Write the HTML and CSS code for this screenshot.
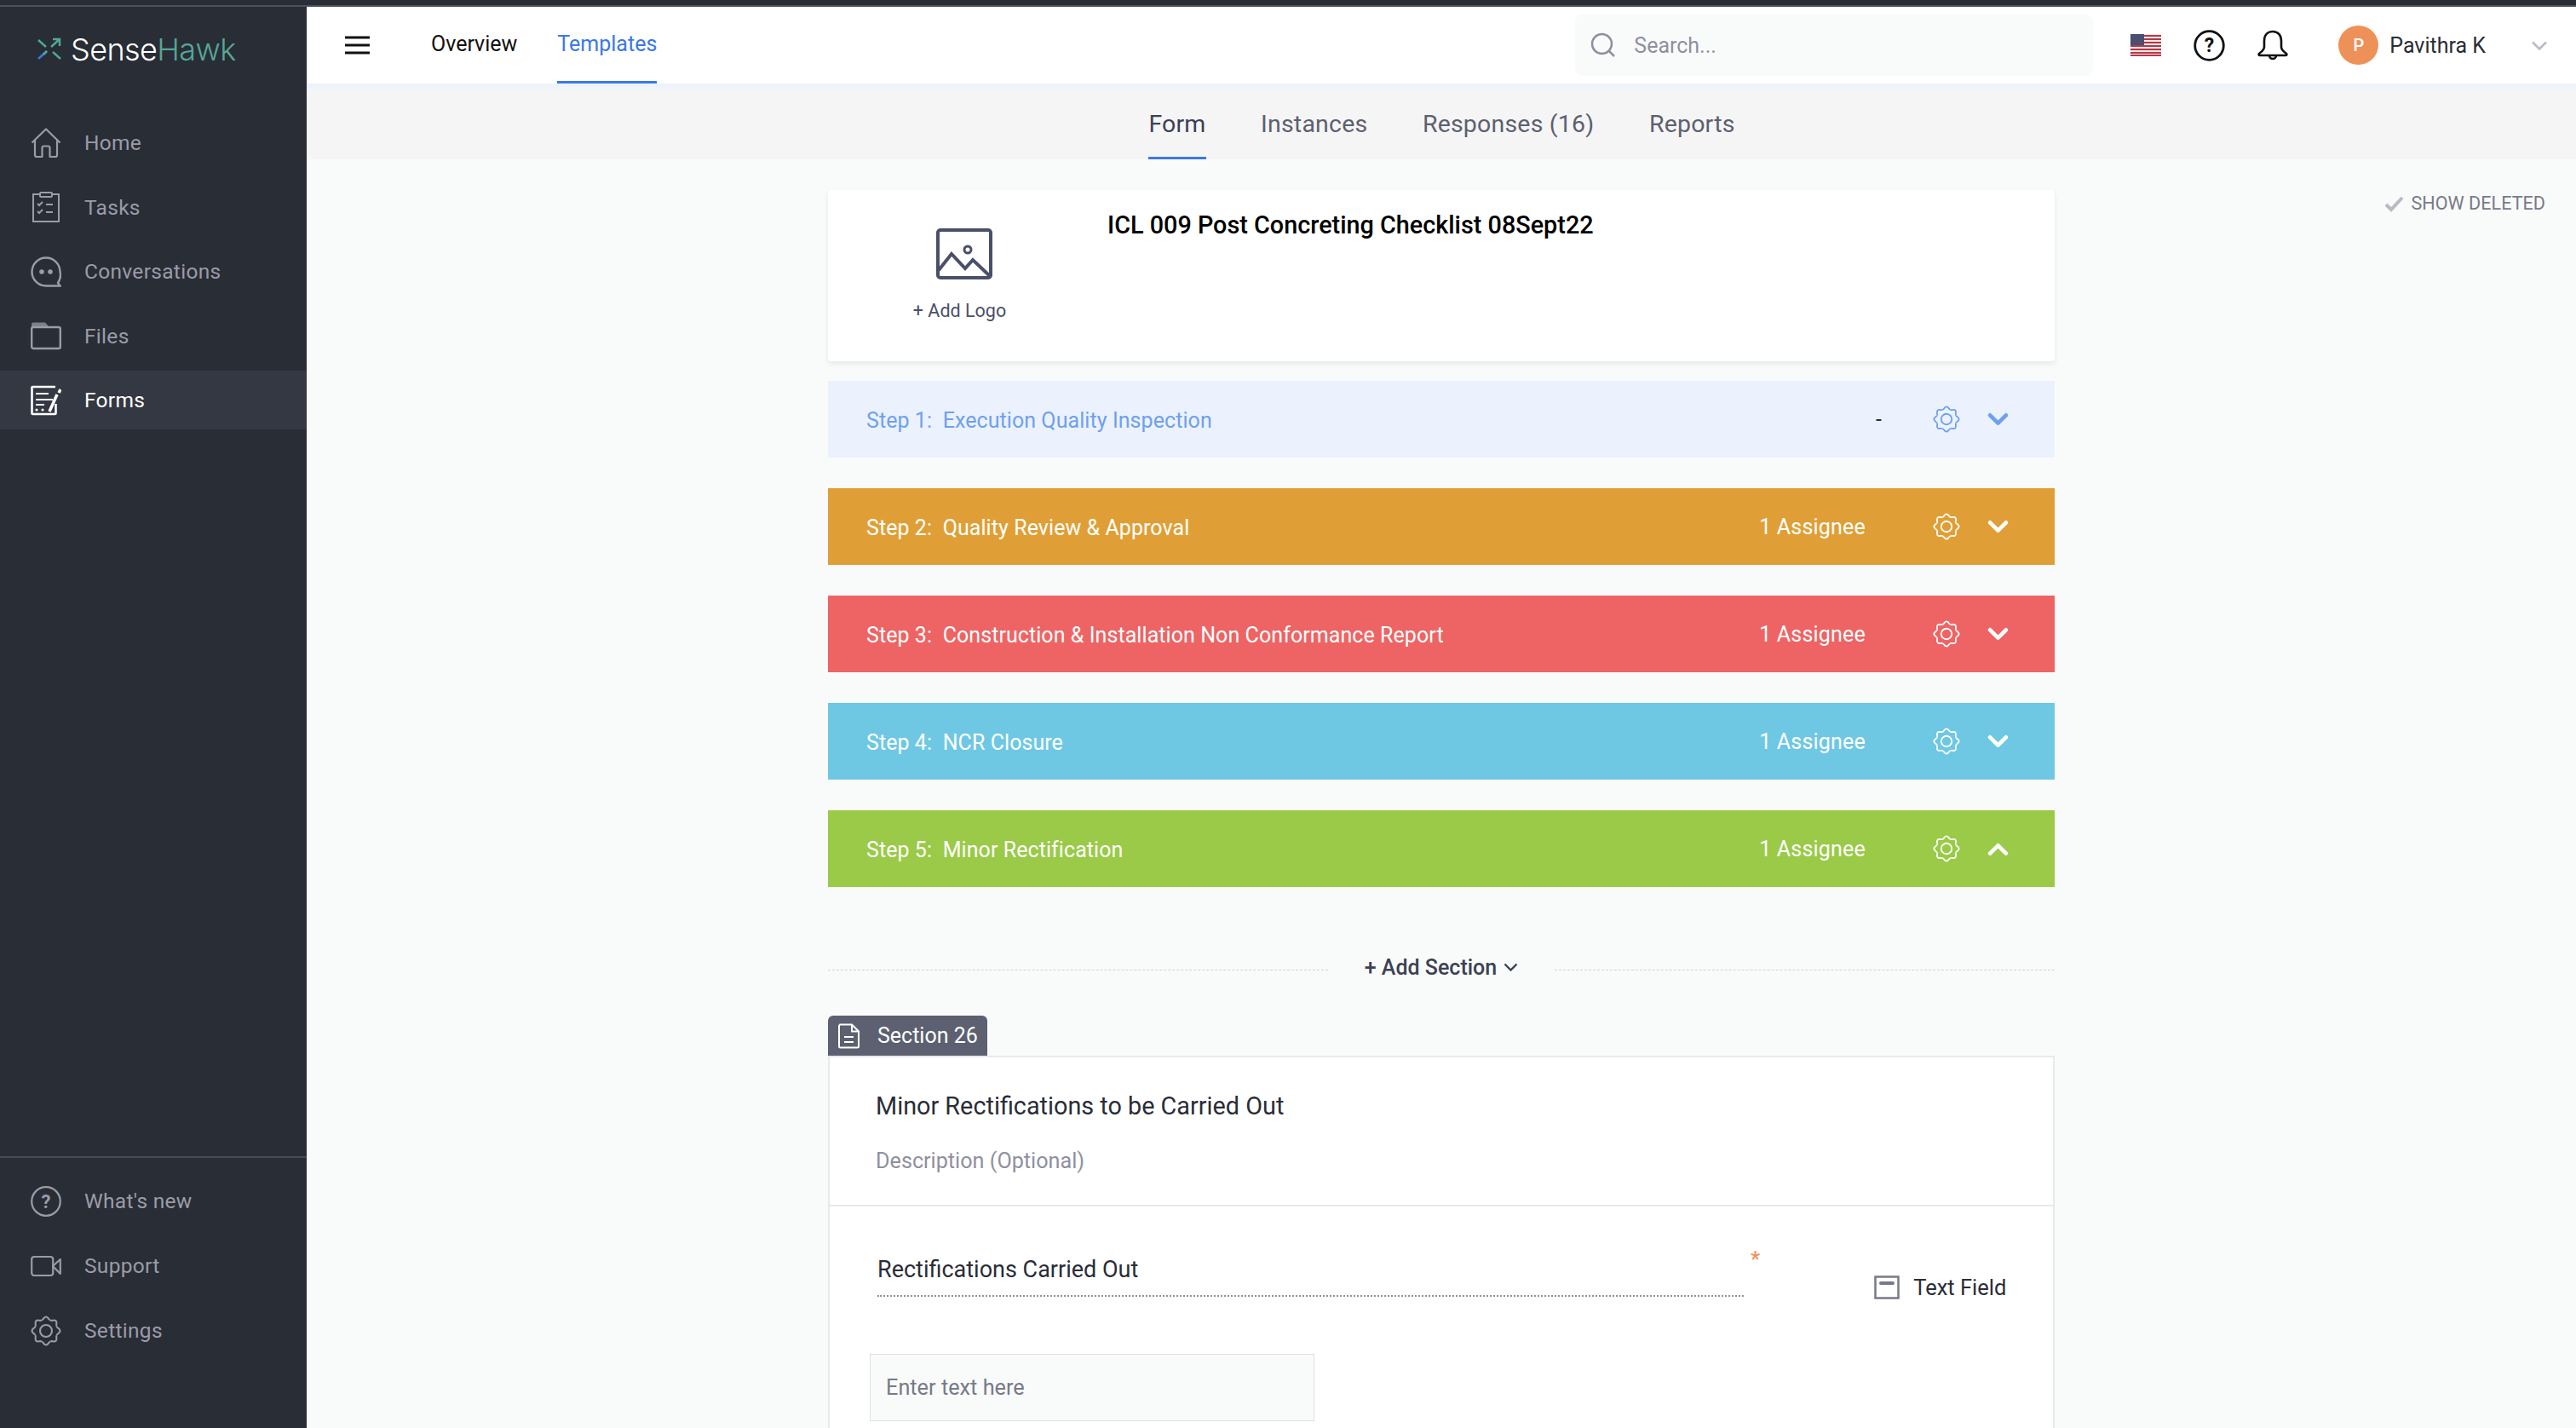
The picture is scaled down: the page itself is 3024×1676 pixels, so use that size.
FILE: index.html
```html
<!DOCTYPE html>
<html lang="en">
<head>
<meta charset="utf-8">
<title>SenseHawk Forms</title>
<link rel="stylesheet" href="styles.css">
</head>
<body>
<svg class="defs" width="0" height="0" aria-hidden="true">
  <defs>
    <path id="lobe" d="M12.720 5.250C15 5.500 15 1.500 18 1.500C21 1.500 21 5.500 23.280 5.250" fill="none" stroke="currentColor" stroke-width="2.100"/>
    <symbol id="gear" viewBox="0 0 36 36">
      <use href="#lobe"/>
      <use href="#lobe" transform="rotate(45 18 18)"/>
      <use href="#lobe" transform="rotate(90 18 18)"/>
      <use href="#lobe" transform="rotate(135 18 18)"/>
      <use href="#lobe" transform="rotate(180 18 18)"/>
      <use href="#lobe" transform="rotate(225 18 18)"/>
      <use href="#lobe" transform="rotate(270 18 18)"/>
      <use href="#lobe" transform="rotate(315 18 18)"/>
      <circle cx="18" cy="18" r="7" fill="none" stroke="currentColor" stroke-width="2.100"/>
    </symbol>
    <symbol id="chev" viewBox="0 0 24 16">
      <path d="M3 3l9 9 9-9" fill="none" stroke="currentColor" stroke-width="4.500" stroke-linecap="round" stroke-linejoin="round"/>
    </symbol>
  </defs>
</svg>
<div class="strip"></div>
<div class="app">
  <aside class="sidebar">
    <div class="logo">
      <svg class="logo-mark" width="30" height="28" viewBox="0 0 30 28">
        <path d="M2 3l9 8" stroke="#4fa899" stroke-width="2.500" fill="none"/>
        <path d="M19 17l9 8" stroke="#4fa899" stroke-width="2.500" fill="none"/>
        <path d="M2 25L12 16" stroke="#3b78e7" stroke-width="2.500" fill="none"/>
        <path d="M8 20l4-4" stroke="#4fa899" stroke-width="2.500" fill="none"/>
        <path d="M17 11l10-9M19 2h8v8" stroke="#4fa899" stroke-width="2.500" fill="none"/>
      </svg>
      <span class="logo-text">Sense<span class="logo-accent">Hawk</span></span>
    </div>
    <nav class="nav">
      <a class="nav-item">
        <svg class="nav-icon" viewBox="0 0 36 36"><path d="M1.500 17.500L18 1.500l16.500 16M5 14.500V32a2 2 0 0 0 2 2h6.500V23.500a2 2 0 0 1 2-2h5a2 2 0 0 1 2 2V34H29a2 2 0 0 0 2-2V14.500" fill="none" stroke="currentColor" stroke-width="2.200" stroke-linejoin="round"/></svg>
        <span>Home</span>
      </a>
      <a class="nav-item">
        <svg class="nav-icon" viewBox="0 0 36 36"><path d="M10 3H3v32h30V3h-7" fill="none" stroke="currentColor" stroke-width="2"/><rect x="11" y="1" width="14" height="5" rx="1" fill="none" stroke="currentColor" stroke-width="2"/><path d="M8 14l2 2 4-4M8 23l2 2 4-4M18 15h8M18 24h8" fill="none" stroke="currentColor" stroke-width="2"/></svg>
        <span>Tasks</span>
      </a>
      <a class="nav-item">
        <svg class="nav-icon" viewBox="0 0 36 36"><path d="M18 1.500a16.500 16.500 0 1 0 0 33h16.500l-2.500-3.500a16.500 16.500 0 0 0 2.500-13A16.500 16.500 0 0 0 18 1.500z" fill="none" stroke="currentColor" stroke-width="2.400"/><circle cx="13" cy="18" r="2.800" fill="currentColor"/><circle cx="23" cy="18" r="2.800" fill="currentColor"/></svg>
        <span>Conversations</span>
      </a>
      <a class="nav-item">
        <svg class="nav-icon" viewBox="0 0 36 36"><path d="M1 8V4.500A2 2 0 0 1 3 2.500h14l5 5.500" fill="currentColor" opacity=".75"/><rect x="1.200" y="8" width="33.600" height="25" rx="2" fill="none" stroke="currentColor" stroke-width="2.400"/></svg>
        <span>Files</span>
      </a>
      <a class="nav-item nav-item-active">
        <svg class="nav-icon" viewBox="0 0 36 36"><path d="M29 2H2.500a1 1 0 0 0-1 1v30a1 1 0 0 0 1 1h26a1 1 0 0 0 1-1V22" fill="none" stroke="currentColor" stroke-width="2.600"/><path d="M6 10h15M6 17h20M6 23h10" stroke="currentColor" stroke-width="2"/><circle cx="7" cy="29" r="1.600" fill="currentColor"/><circle cx="14" cy="29" r="1.600" fill="currentColor"/><path d="M22 31l9-20M33 9l2-4" stroke="currentColor" stroke-width="3.500"/></svg>
        <span>Forms</span>
      </a>
    </nav>
    <nav class="nav-bottom">
      <a class="nav-item">
        <svg class="nav-icon" viewBox="0 0 36 36"><circle cx="18" cy="18" r="16.800" fill="none" stroke="currentColor" stroke-width="2.200"/><text class="help-glyph" x="18" y="26" text-anchor="middle">?</text></svg>
        <span>What's new</span>
      </a>
      <a class="nav-item">
        <svg class="nav-icon" viewBox="0 0 36 36"><rect x="1.200" y="7" width="25" height="22" rx="3" fill="none" stroke="currentColor" stroke-width="2.200"/><path d="M26 18l8.800-8v17z" fill="none" stroke="currentColor" stroke-width="2.200" stroke-linejoin="round"/></svg>
        <span>Support</span>
      </a>
      <a class="nav-item">
        <svg class="nav-icon"><use href="#gear"/></svg>
        <span>Settings</span>
      </a>
    </nav>
  </aside>
  <main class="main">
    <header class="topbar">
      <svg class="burger" width="30" height="22" viewBox="0 0 30 22"><path d="M0 2h29M0 11h29M0 20h29" stroke="#111" stroke-width="2.800"/></svg>
      <a class="top-link">Overview</a>
      <a class="top-link top-link-active">Templates</a>
      <div class="search">
        <svg class="search-icon" width="30" height="30" viewBox="0 0 30 30"><circle cx="13.500" cy="13.500" r="11.500" fill="none" stroke="#8e909f" stroke-width="2.500"/><path d="M22 22l6 6" stroke="#8e909f" stroke-width="2.500"/></svg>
        <span class="search-text">Search...</span>
      </div>
      <svg class="flag" width="36" height="26" viewBox="0 0 36 26">
        <rect width="36" height="26" fill="#f3e9e4"/>
        <path d="M0 2h36M0 6h36M0 10h36M0 14h36M0 18h36M0 22h36M0 25h36" stroke="#b2394a" stroke-width="2"/>
        <rect width="16" height="13" fill="#4b4f70"/>
      </svg>
      <svg class="top-icon" width="37" height="37" viewBox="0 0 37 37"><circle cx="18.500" cy="18.500" r="16.800" fill="none" stroke="#111" stroke-width="2.800"/><text class="help-glyph-dark" x="18.500" y="26" text-anchor="middle">?</text></svg>
      <svg class="top-icon bell" width="36" height="37" viewBox="0 0 36 37"><path d="M18 2c-6.500 0-10 4.500-10 11v7c0 3-2 5-5.500 7.500-1.500 1-1 2.500.5 2.500h30c1.500 0 2-1.500.5-2.500C30 25 28 23 28 20v-7c0-6.500-3.500-11-10-11z" fill="none" stroke="#111" stroke-width="2.600" stroke-linejoin="round"/><path d="M14 30a4 4 0 0 0 8 0" fill="none" stroke="#111" stroke-width="2.600"/></svg>
      <div class="avatar">P</div>
      <span class="user-name">Pavithra K</span>
      <svg class="user-chev" width="20" height="11" viewBox="0 0 20 11"><path d="M2 1.500l8 8 8-8" fill="none" stroke="#b9bbc4" stroke-width="2.500"/></svg>
    </header>
    <div class="tabs">
      <a class="tab tab-active">Form</a>
      <a class="tab">Instances</a>
      <a class="tab">Responses (16)</a>
      <a class="tab">Reports</a>
    </div>
    <div class="content">
      <div class="form-col">
        <section class="head-card">
          <div class="logo-pick">
            <svg class="logo-pick-icon" width="66" height="60" viewBox="0 0 66 60"><rect x="2" y="2" width="62" height="56" rx="3" fill="none" stroke="#4a5068" stroke-width="4"/><circle cx="37" cy="25" r="4" fill="none" stroke="#4a5068" stroke-width="3"/><path d="M3 49l15-19 16 17 9-10 20 19" fill="none" stroke="#4a5068" stroke-width="4"/></svg>
            <span class="add-logo">+ Add Logo</span>
          </div>
          <h1 class="form-title">ICL 009 Post Concreting Checklist 08Sept22</h1>
        </section>
        <div class="steps">
          <div class="step step-1">
            <span class="step-name">Step 1:&nbsp; Execution Quality Inspection</span>
            <span class="step-dash">-</span>
            <svg class="step-gear"><use href="#gear"/></svg>
            <svg class="step-chev"><use href="#chev"/></svg>
          </div>
          <div class="step step-2">
            <span class="step-name">Step 2:&nbsp; Quality Review &amp; Approval</span>
            <span class="step-assign">1 Assignee</span>
            <svg class="step-gear"><use href="#gear"/></svg>
            <svg class="step-chev"><use href="#chev"/></svg>
          </div>
          <div class="step step-3">
            <span class="step-name">Step 3:&nbsp; Construction &amp; Installation Non Conformance Report</span>
            <span class="step-assign">1 Assignee</span>
            <svg class="step-gear"><use href="#gear"/></svg>
            <svg class="step-chev"><use href="#chev"/></svg>
          </div>
          <div class="step step-4">
            <span class="step-name">Step 4:&nbsp; NCR Closure</span>
            <span class="step-assign">1 Assignee</span>
            <svg class="step-gear"><use href="#gear"/></svg>
            <svg class="step-chev"><use href="#chev"/></svg>
          </div>
          <div class="step step-5">
            <span class="step-name">Step 5:&nbsp; Minor Rectification</span>
            <span class="step-assign">1 Assignee</span>
            <svg class="step-gear"><use href="#gear"/></svg>
            <svg class="step-chev step-chev-up"><use href="#chev"/></svg>
          </div>
        </div>
        <div class="add-section">
          <span class="dash-line"></span>
          <span class="add-section-label">+ Add Section
            <svg class="add-chev" width="17" height="10" viewBox="0 0 17 10"><path d="M1.500 1.500L8.500 8.500l7-7" fill="none" stroke="#3c4155" stroke-width="2.400"/></svg>
          </span>
          <span class="dash-line"></span>
        </div>
        <div class="section-tab">
          <svg width="26" height="30" viewBox="0 0 26 30"><path d="M2 1.500h14l8 8V27a1.500 1.500 0 0 1-1.500 1.500h-20A1.500 1.500 0 0 1 1 27V3z" fill="none" stroke="#fff" stroke-width="2"/><path d="M16 1.500V9.500h8M7 16h11M7 22h11" fill="none" stroke="#fff" stroke-width="2"/></svg>
          <span>Section 26</span>
        </div>
        <section class="section-card">
          <div class="section-head">
            <div class="section-title">Minor Rectifications to be Carried Out</div>
            <div class="section-desc">Description (Optional)</div>
          </div>
          <div class="field">
            <div class="field-row">
              <div class="field-label">Rectifications Carried Out</div>
              <span class="field-req">*</span>
              <div class="field-type">
                <svg width="30" height="28" viewBox="0 0 30 28"><rect x="1.500" y="1.500" width="27" height="25" fill="none" stroke="#777a88" stroke-width="2.500"/><path d="M8 9h14" stroke="#777a88" stroke-width="4" stroke-linecap="round"/></svg>
                <span>Text Field</span>
              </div>
            </div>
            <div class="field-input">Enter text here</div>
          </div>
        </section>
      </div>
      <div class="show-deleted">
        <svg width="23" height="19" viewBox="0 0 23 19"><path d="M2 10l6 6L21 2" fill="none" stroke="#b9bbc4" stroke-width="4"/></svg>
        <span>SHOW DELETED</span>
      </div>
    </div>
  </main>
</div>
</body>
</html>
```

FILE: styles.css
```css
* { box-sizing: border-box; }
html, body { margin: 0; height: 100%; }
body {
  width: 3024px;
  height: 1676px;
  overflow: hidden;
  display: flex;
  flex-direction: column;
  font-family: Roboto, "Liberation Sans", sans-serif;
  background: #f9fbfa;
  color: #292d36;
}
.defs { position: absolute; }
.strip {
  height: 8px;
  flex: none;
  background: #292d36;
  border-bottom: 2px solid #4c5060;
}
.app { display: flex; flex: 1; min-height: 0; }

/* sidebar */
.sidebar {
  width: 360px;
  flex: none;
  display: flex;
  flex-direction: column;
  background: #292d36;
  color: #9a9ca8;
}
.logo {
  height: 125px;
  flex: none;
  padding: 28px 0 0 43px;
  display: flex;
  align-items: flex-start;
  gap: 10px;
}
.logo-mark { margin-top: 8px; }
.logo-text {
  font-family: Inter, sans-serif;
  font-weight: 300;
  font-size: 36px;
  line-height: 44px;
  color: #fff;
  letter-spacing: -0.6px;
}
.logo-accent { color: #56a697; }
.nav { display: flex; flex-direction: column; gap: 6.6px; }
.nav-item {
  height: 69px;
  display: flex;
  align-items: center;
  gap: 27px;
  padding-left: 36px;
  font-size: 24.5px;
  letter-spacing: 0.3px;
}
.nav-item-active { background: #343842; color: #fff; }
.nav-icon { width: 36px; height: 36px; flex: none; }
.nav-bottom {
  margin-top: auto;
  padding: 16px 0 80px;
  border-top: 2px solid #464a5a;
  display: flex;
  flex-direction: column;
  gap: 7px;
}
.help-glyph { font: 700 22px Roboto, sans-serif; fill: currentColor; }
.help-glyph-dark { font: 700 23px Roboto, sans-serif; fill: #111; }

/* top bar */
.main { flex: 1; min-width: 0; display: flex; flex-direction: column; }
.topbar {
  height: 90px;
  flex: none;
  display: flex;
  align-items: center;
  background: #fff;
  padding-left: 45px;
}
.burger { flex: none; margin-right: 71px; }
.top-link {
  height: 90px;
  padding-top: 26px;
  margin-right: 47px;
  font-size: 25px;
  line-height: 36px;
  color: #111;
  border-bottom: 3px solid transparent;
}
.top-link-active { color: #3b78e7; border-bottom-color: #3b78e7; }
.search {
  width: 608px;
  height: 72px;
  margin-left: 1031px;
  padding-left: 18px;
  display: flex;
  align-items: center;
  gap: 21px;
  background: #f9fbfa;
  border-radius: 8px;
}
.search-text { font-size: 25px; color: #8e909f; }
.flag { margin-left: 44px; flex: none; }
.top-icon { margin-left: 38px; flex: none; }
.bell { margin-left: 38px; }
.avatar {
  width: 47px;
  height: 46px;
  margin-left: 59px;
  flex: none;
  border-radius: 50%;
  background: #ee9158;
  color: #fff;
  font-size: 20px;
  font-weight: 500;
  display: flex;
  align-items: center;
  justify-content: center;
}
.user-name { margin-left: 13px; font-size: 25px; color: #292d36; }
.user-chev { margin-left: 53px; flex: none; }

/* tabs */
.tabs {
  height: 89px;
  flex: none;
  display: flex;
  justify-content: center;
  gap: 64.5px;
  padding-left: 1px;
  background: linear-gradient(#ebf2fe 0, #f5f5f5 10px);
}
.tab {
  height: 89px;
  padding-top: 29px;
  font-size: 28.500px;
  line-height: 38px;
  color: #5c6070;
  letter-spacing: 0.2px;
}
.tab-active { color: #3c4155; border-bottom: 3px solid #3b78e7; }

/* content */
.content {
  flex: 1;
  min-height: 0;
  display: flex;
  align-items: flex-start;
  padding-left: 612px;
  padding-top: 36px;
}
.form-col { width: 1440px; flex: none; }
.show-deleted {
  margin-left: auto;
  margin-right: 36px;
  display: flex;
  align-items: center;
  gap: 9px;
  font-size: 21.600px;
  line-height: 24px;
  color: #777a88;
  margin-top: 4px;
}
.head-card {
  height: 201px;
  display: flex;
  background: #fff;
  border-radius: 4px;
  box-shadow: 0 3px 6px rgba(0, 0, 0, 0.08);
}
.logo-pick {
  width: 317px;
  flex: none;
  display: flex;
  flex-direction: column;
  align-items: center;
  padding: 45px 0 0 2px;
}
.add-logo { margin: 22px 10px 0 0; font-size: 21.500px; line-height: 30px; color: #4a5068; }
.form-title {
  margin: 23px 0 0 11px;
  font-size: 28.800px;
  line-height: 36px;
  font-weight: 500;
  color: #000;
}
.steps { display: flex; flex-direction: column; gap: 36px; margin-top: 23px; }
.step {
  height: 90px;
  display: flex;
  align-items: center;
  padding-left: 45px;
  font-size: 25px;
  color: #fff;
}
.step-1 { background: #ebf2fe; color: #6fa0ee; }
.step-2 { background: #e09f36; }
.step-3 { background: #ee6464; }
.step-4 { background: #6fc8e3; }
.step-5 { background: #9aca48; }
.step-name { flex: 1; padding-top: 2px; letter-spacing: 0.07px; }
.step-assign { margin-right: 78.500px; letter-spacing: 0.2px; }
.step-dash { margin-right: 59.500px; color: #292d36; }
.step-gear { width: 32px; height: 32px; flex: none; }
.step-chev { width: 25px; height: 17px; margin: 0 54px 0 32.500px; flex: none; }
.step-chev-up { transform: rotate(180deg); }
.add-section {
  display: flex;
  align-items: center;
  margin-top: 70px;
  height: 52px;
}
.dash-line { flex: 1; border-top: 1px dashed #cfd1d6; margin-top: 2px; }
.add-section-label {
  display: flex;
  align-items: center;
  gap: 8px;
  padding: 0 43px;
  font-size: 25px;
  font-weight: 500;
  color: #3c4155;
  margin-top: -4px;
}
.section-tab {
  width: 187px;
  height: 47px;
  margin-top: 29px;
  padding-left: 12px;
  display: flex;
  align-items: center;
  gap: 20px;
  background: #5c6070;
  color: #fff;
  font-size: 25px;
  border-radius: 6px 6px 0 0;
}
.section-card {
  background: #fff;
  border: 2px solid #e9e9e9;
  height: 500px;
}
.section-head {
  height: 175px;
  padding: 39px 0 0 54px;
  border-bottom: 2px solid #e9e9e9;
}
.section-title { font-size: 28.800px; line-height: 36px; color: #292d36; }
.section-desc { margin-top: 32px; font-size: 25.200px; line-height: 30px; color: #8e909f; }
.field { position: relative; }
.field-row { display: flex; padding: 54px 0 0 56px; height: 135px; align-items: flex-start; }
.field-label {
  width: 1017px;
  flex: none;
  height: 52px;
  font-size: 27px;
  line-height: 40px;
  color: #292d36;
  border-bottom: 2px dotted #8e909f;
}
.field-req { margin: -8px 0 0 8px; color: #ee9158; font-size: 26px; line-height: 32px; }
.field-type {
  display: flex;
  align-items: center;
  gap: 16px;
  margin: 26px 0 0 134px;
  font-size: 25.500px;
  line-height: 30px;
}
.field-input {
  width: 522px;
  height: 79px;
  margin: 38px 0 0 47px;
  padding-left: 18px;
  display: flex;
  align-items: center;
  background: #f9fbfa;
  border: 1px solid #dfe0e6;
  font-size: 25.300px;
  color: #777a88;
}
```
